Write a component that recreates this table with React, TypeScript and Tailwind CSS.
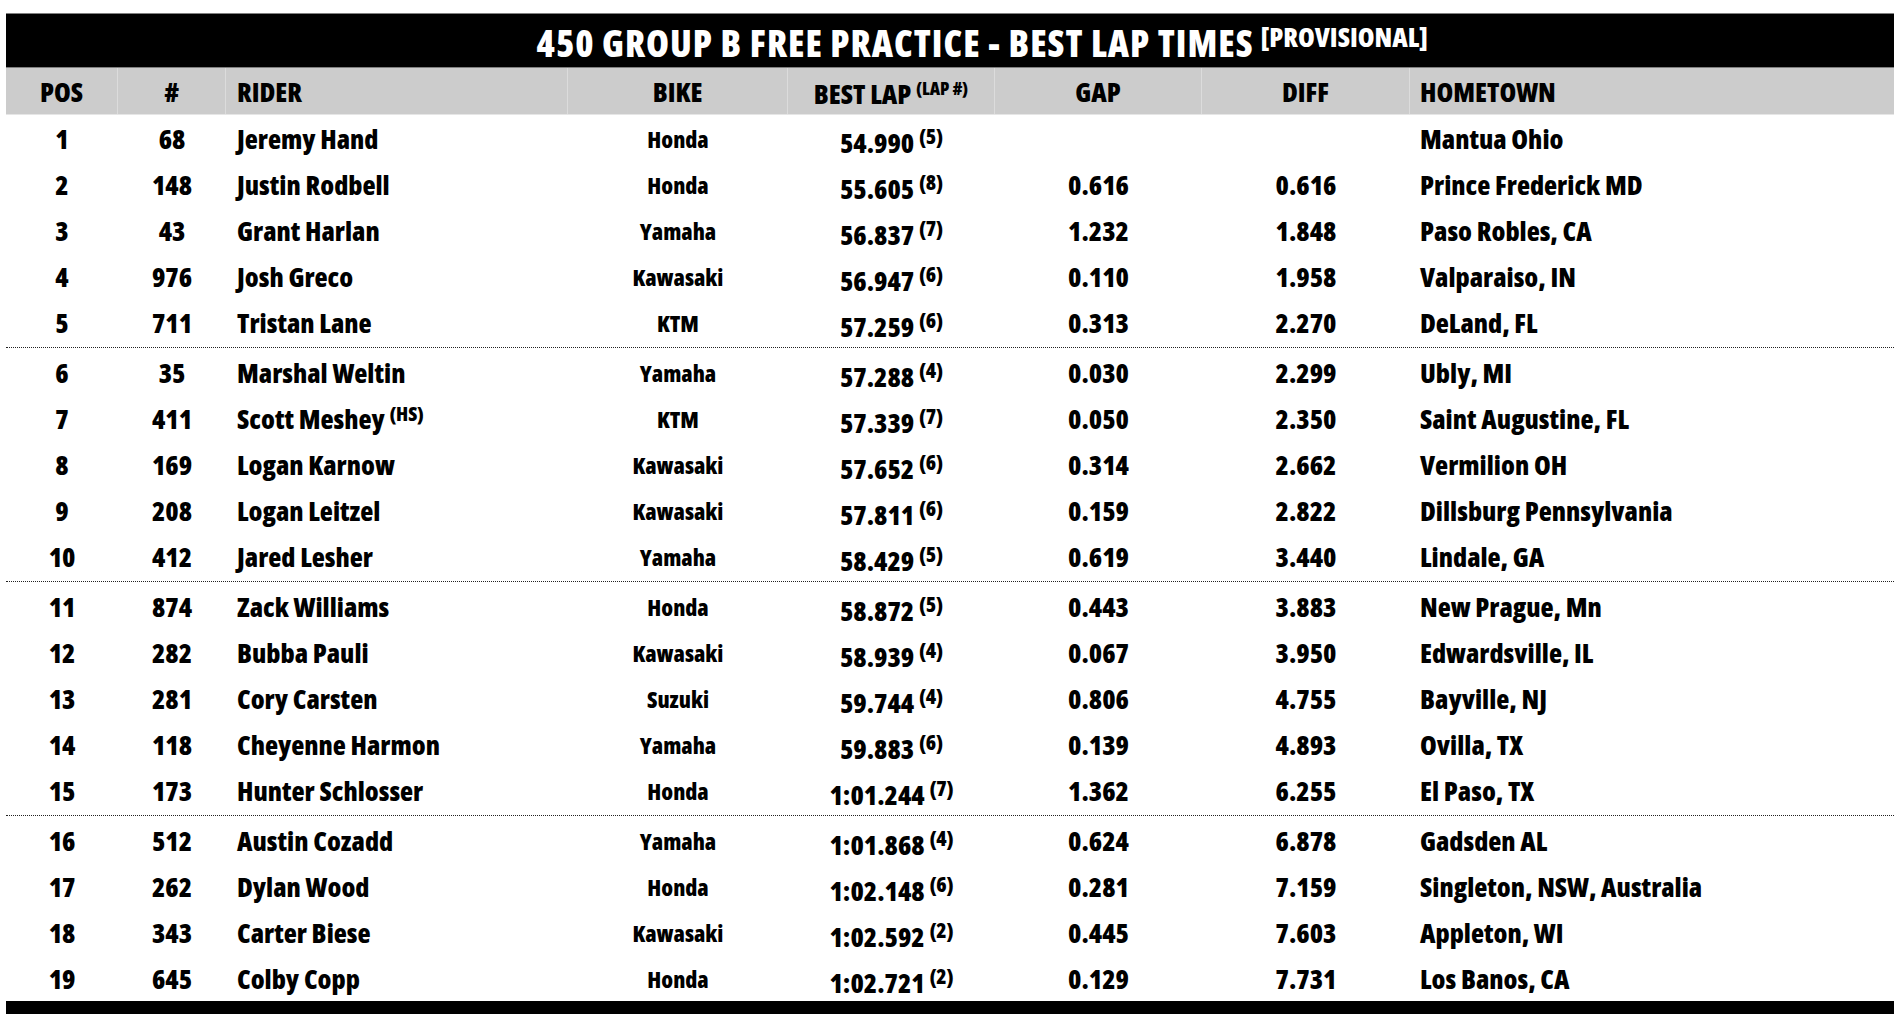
import React from 'react';

type Row = {
  pos: number;
  num: string;
  rider: string;
  tag?: string;
  bike: string;
  lap: string;
  lapNo: string;
  gap: string;
  diff: string;
  hometown: string;
};

const rows: Row[] = [
  { pos: 1, num: '68', rider: 'Jeremy Hand', bike: 'Honda', lap: '54.990', lapNo: '5', gap: '', diff: '', hometown: 'Mantua Ohio' },
  { pos: 2, num: '148', rider: 'Justin Rodbell', bike: 'Honda', lap: '55.605', lapNo: '8', gap: '0.616', diff: '0.616', hometown: 'Prince Frederick MD' },
  { pos: 3, num: '43', rider: 'Grant Harlan', bike: 'Yamaha', lap: '56.837', lapNo: '7', gap: '1.232', diff: '1.848', hometown: 'Paso Robles, CA' },
  { pos: 4, num: '976', rider: 'Josh Greco', bike: 'Kawasaki', lap: '56.947', lapNo: '6', gap: '0.110', diff: '1.958', hometown: 'Valparaiso, IN' },
  { pos: 5, num: '711', rider: 'Tristan Lane', bike: 'KTM', lap: '57.259', lapNo: '6', gap: '0.313', diff: '2.270', hometown: 'DeLand, FL' },
  { pos: 6, num: '35', rider: 'Marshal Weltin', bike: 'Yamaha', lap: '57.288', lapNo: '4', gap: '0.030', diff: '2.299', hometown: 'Ubly, MI' },
  { pos: 7, num: '411', rider: 'Scott Meshey', tag: 'HS', bike: 'KTM', lap: '57.339', lapNo: '7', gap: '0.050', diff: '2.350', hometown: 'Saint Augustine, FL' },
  { pos: 8, num: '169', rider: 'Logan Karnow', bike: 'Kawasaki', lap: '57.652', lapNo: '6', gap: '0.314', diff: '2.662', hometown: 'Vermilion OH' },
  { pos: 9, num: '208', rider: 'Logan Leitzel', bike: 'Kawasaki', lap: '57.811', lapNo: '6', gap: '0.159', diff: '2.822', hometown: 'Dillsburg Pennsylvania' },
  { pos: 10, num: '412', rider: 'Jared Lesher', bike: 'Yamaha', lap: '58.429', lapNo: '5', gap: '0.619', diff: '3.440', hometown: 'Lindale, GA' },
  { pos: 11, num: '874', rider: 'Zack Williams', bike: 'Honda', lap: '58.872', lapNo: '5', gap: '0.443', diff: '3.883', hometown: 'New Prague, Mn' },
  { pos: 12, num: '282', rider: 'Bubba Pauli', bike: 'Kawasaki', lap: '58.939', lapNo: '4', gap: '0.067', diff: '3.950', hometown: 'Edwardsville, IL' },
  { pos: 13, num: '281', rider: 'Cory Carsten', bike: 'Suzuki', lap: '59.744', lapNo: '4', gap: '0.806', diff: '4.755', hometown: 'Bayville, NJ' },
  { pos: 14, num: '118', rider: 'Cheyenne Harmon', bike: 'Yamaha', lap: '59.883', lapNo: '6', gap: '0.139', diff: '4.893', hometown: 'Ovilla, TX' },
  { pos: 15, num: '173', rider: 'Hunter Schlosser', bike: 'Honda', lap: '1:01.244', lapNo: '7', gap: '1.362', diff: '6.255', hometown: 'El Paso, TX' },
  { pos: 16, num: '512', rider: 'Austin Cozadd', bike: 'Yamaha', lap: '1:01.868', lapNo: '4', gap: '0.624', diff: '6.878', hometown: 'Gadsden AL' },
  { pos: 17, num: '262', rider: 'Dylan Wood', bike: 'Honda', lap: '1:02.148', lapNo: '6', gap: '0.281', diff: '7.159', hometown: 'Singleton, NSW, Australia' },
  { pos: 18, num: '343', rider: 'Carter Biese', bike: 'Kawasaki', lap: '1:02.592', lapNo: '2', gap: '0.445', diff: '7.603', hometown: 'Appleton, WI' },
  { pos: 19, num: '645', rider: 'Colby Copp', bike: 'Honda', lap: '1:02.721', lapNo: '2', gap: '0.129', diff: '7.731', hometown: 'Los Banos, CA' },
];

const cols = 'grid grid-cols-[112px_108px_342px_220px_207px_207px_208px_1fr]';

// split into groups of five, each closed by a dotted rule
const groups: Row[][] = [];
for (let i = 0; i < rows.length; i += 5) groups.push(rows.slice(i, i + 5));

const App: React.FC = () => {
  return (
    <div className="w-full h-[1014px] overflow-hidden bg-white">
      <div className="w-[1952px] ml-[6px] pt-[13px] font-['Open_Sans',sans-serif] font-extrabold font-stretch-condensed text-black">
        {/* Title */}
        <div className="h-[55px] bg-black border-t border-b border-[#808080] flex items-center justify-center text-white text-[37px] leading-none tracking-[1px]">
          <span className="pt-[3px]">
            450 GROUP B FREE PRACTICE - BEST LAP TIMES{' '}
            <span className="text-[27px] tracking-normal align-[10px]">[PROVISIONAL]</span>
          </span>
        </div>

        {/* Header */}
        <div className={`${cols} h-[47px] bg-[#cccccc] border-b border-[#e6e6e6] text-[27px] leading-none`}>
          <div className="flex items-center justify-center border-r border-[#dcdcdc]">POS</div>
          <div className="flex items-center justify-center border-r border-[#dcdcdc]">#</div>
          <div className="flex items-center pl-[11px] border-r border-[#dcdcdc]">RIDER</div>
          <div className="flex items-center justify-center border-r border-[#dcdcdc]">BIKE</div>
          <div className="flex items-center justify-center border-r border-[#dcdcdc]">
            <span className="pt-[4px]">
              BEST LAP <span className="text-[18px] align-[9px]">(LAP #)</span>
            </span>
          </div>
          <div className="flex items-center justify-center border-r border-[#dcdcdc]">GAP</div>
          <div className="flex items-center justify-center border-r border-[#dcdcdc]">DIFF</div>
          <div className="flex items-center pl-[10px]">HOMETOWN</div>
        </div>

        {/* Body */}
        {groups.map((group, gi) => (
          <div
            key={gi}
            className={gi < groups.length - 1 ? 'pb-[2px] mb-[1px] border-b border-dotted border-[#222]' : ''}
          >
            {group.map((r) => (
              <div key={r.pos} className={`${cols} h-[46px] text-[27px] leading-none`}>
                <div className="flex items-center justify-center">{r.pos}</div>
                <div className="flex items-center justify-center">{r.num}</div>
                <div className="flex items-center pl-[11px]">
                  <span>
                    {r.rider}
                    {r.tag && (
                      <>
                        {' '}
                        <span className="text-[20px] align-[8px]">({r.tag})</span>
                      </>
                    )}
                  </span>
                </div>
                <div className="flex items-center justify-center text-[23px] pt-[2px]">{r.bike}</div>
                <div className="flex items-center justify-center pt-[5px]">
                  <span>
                    {r.lap} <span className="text-[21px] align-[9px]">({r.lapNo})</span>
                  </span>
                </div>
                <div className="flex items-center justify-center">{r.gap}</div>
                <div className="flex items-center justify-center">{r.diff}</div>
                <div className="flex items-center pl-[10px]">{r.hometown}</div>
              </div>
            ))}
          </div>
        ))}

        {/* Bottom rule */}
        <div className="h-[20px] bg-black" />
      </div>
    </div>
  );
};

export default App;
